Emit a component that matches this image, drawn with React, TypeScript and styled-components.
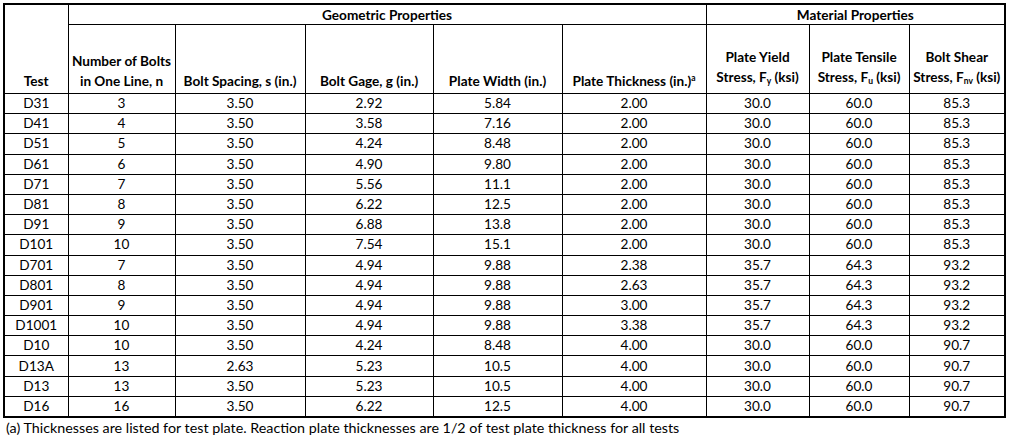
import styled, { createGlobalStyle } from 'styled-components'

const GlobalStyle = createGlobalStyle`
  html, body {
    margin: 0;
    padding: 0;
    background: #fff;
  }
  body {
    font-family: Lato, 'Liberation Sans', sans-serif;
    color: #000;
  }
`

const Page = styled.div`
  padding: 3px 0 0 3px;
  width: 1010px;
  height: 437px;
  box-sizing: border-box;
`

const Table = styled.table`
  border-collapse: collapse;
  table-layout: fixed;
  width: 1003px;
  border: 2px solid #000;
  font-size: 13.6px;
`

const GroupHead = styled.th`
  height: 19px;
  padding: 0;
  border: 1px solid #000;
  font-weight: 700;
  text-align: center;
  vertical-align: middle;
`

const ColHead = styled.th`
  height: 66px;
  padding: 0 0 2px;
  border: 1px solid #000;
  font-weight: 700;
  text-align: center;
  vertical-align: bottom;
  line-height: 20px;
  white-space: nowrap;
`

const Cell = styled.td`
  height: 19.2px;
  padding: 0;
  border: 1px solid #000;
  text-align: center;
  vertical-align: middle;
  line-height: 19px;
`

const Sub = styled.sub`
  font-size: 8.5px;
  vertical-align: -2px;
`

const Sup = styled.sup`
  font-size: 8.5px;
  vertical-align: 5px;
`

const Note = styled.p`
  margin: 1px 0 0 3px;
  font-size: 14.3px;
`

const widths = [64, 107, 130, 128, 129, 144, 103, 100, 96]

const rows: string[][] = [
  ['D31', '3', '3.50', '2.92', '5.84', '2.00', '30.0', '60.0', '85.3'],
  ['D41', '4', '3.50', '3.58', '7.16', '2.00', '30.0', '60.0', '85.3'],
  ['D51', '5', '3.50', '4.24', '8.48', '2.00', '30.0', '60.0', '85.3'],
  ['D61', '6', '3.50', '4.90', '9.80', '2.00', '30.0', '60.0', '85.3'],
  ['D71', '7', '3.50', '5.56', '11.1', '2.00', '30.0', '60.0', '85.3'],
  ['D81', '8', '3.50', '6.22', '12.5', '2.00', '30.0', '60.0', '85.3'],
  ['D91', '9', '3.50', '6.88', '13.8', '2.00', '30.0', '60.0', '85.3'],
  ['D101', '10', '3.50', '7.54', '15.1', '2.00', '30.0', '60.0', '85.3'],
  ['D701', '7', '3.50', '4.94', '9.88', '2.38', '35.7', '64.3', '93.2'],
  ['D801', '8', '3.50', '4.94', '9.88', '2.63', '35.7', '64.3', '93.2'],
  ['D901', '9', '3.50', '4.94', '9.88', '3.00', '35.7', '64.3', '93.2'],
  ['D1001', '10', '3.50', '4.94', '9.88', '3.38', '35.7', '64.3', '93.2'],
  ['D10', '10', '3.50', '4.24', '8.48', '4.00', '30.0', '60.0', '90.7'],
  ['D13A', '13', '2.63', '5.23', '10.5', '4.00', '30.0', '60.0', '90.7'],
  ['D13', '13', '3.50', '5.23', '10.5', '4.00', '30.0', '60.0', '90.7'],
  ['D16', '16', '3.50', '6.22', '12.5', '4.00', '30.0', '60.0', '90.7'],
]

export default function App() {
  return (
    <Page>
      <GlobalStyle />
      <Table>
        <colgroup>
          {widths.map((w, i) => (
            <col key={i} style={{ width: w }} />
          ))}
        </colgroup>
        <thead>
          <tr>
            <ColHead rowSpan={2}>Test</ColHead>
            <GroupHead colSpan={5}>Geometric Properties</GroupHead>
            <GroupHead colSpan={3}>Material Properties</GroupHead>
          </tr>
          <tr>
            <ColHead>
              Number of Bolts
              <br />
              in One Line, n
            </ColHead>
            <ColHead>Bolt Spacing, s (in.)</ColHead>
            <ColHead>Bolt Gage, g (in.)</ColHead>
            <ColHead>Plate Width (in.)</ColHead>
            <ColHead>
              Plate Thickness (in.)<Sup>a</Sup>
            </ColHead>
            <ColHead>
              Plate Yield
              <br />
              Stress, F<Sub>y</Sub> (ksi)
            </ColHead>
            <ColHead>
              Plate Tensile
              <br />
              Stress, F<Sub>u</Sub> (ksi)
            </ColHead>
            <ColHead>
              Bolt Shear
              <br />
              Stress, F<Sub>nv</Sub> (ksi)
            </ColHead>
          </tr>
        </thead>
        <tbody>
          {rows.map((r) => (
            <tr key={r[0]}>
              {r.map((v, i) => (
                <Cell key={i}>{v}</Cell>
              ))}
            </tr>
          ))}
        </tbody>
      </Table>
      <Note>
        (a) Thicknesses are listed for test plate. Reaction plate thicknesses are 1/2 of test plate
        thickness for all tests
      </Note>
    </Page>
  )
}
